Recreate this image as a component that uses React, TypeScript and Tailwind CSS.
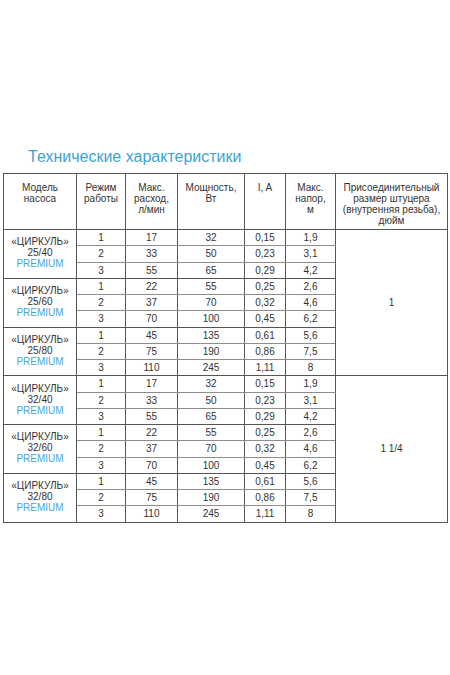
import React from "react";

type Row = [string, string, string, string, string];

const groups: { model: string; rows: Row[] }[] = [
  { model: "25/40", rows: [["1", "17", "32", "0,15", "1,9"], ["2", "33", "50", "0,23", "3,1"], ["3", "55", "65", "0,29", "4,2"]] },
  { model: "25/60", rows: [["1", "22", "55", "0,25", "2,6"], ["2", "37", "70", "0,32", "4,6"], ["3", "70", "100", "0,45", "6,2"]] },
  { model: "25/80", rows: [["1", "45", "135", "0,61", "5,6"], ["2", "75", "190", "0,86", "7,5"], ["3", "110", "245", "1,11", "8"]] },
  { model: "32/40", rows: [["1", "17", "32", "0,15", "1,9"], ["2", "33", "50", "0,23", "3,1"], ["3", "55", "65", "0,29", "4,2"]] },
  { model: "32/60", rows: [["1", "22", "55", "0,25", "2,6"], ["2", "37", "70", "0,32", "4,6"], ["3", "70", "100", "0,45", "6,2"]] },
  { model: "32/80", rows: [["1", "45", "135", "0,61", "5,6"], ["2", "75", "190", "0,86", "7,5"], ["3", "110", "245", "1,11", "8"]] },
];

export default function App() {
  return (
    <div className="w-[450px] h-[675px] bg-white text-[#333] overflow-hidden" style={{ fontFamily: '"Liberation Sans", Arial, sans-serif' }}>
      <div className="pt-[146px] pl-[28px] text-[16px] leading-[22px] text-[#3ea3d1]">
        Технические характеристики
      </div>
      <div className="pl-[3px] pt-[5px]">
        <table className="table-fixed border-collapse w-[444px] text-[10px] leading-[11px] text-center">
          <colgroup>
            <col className="w-[73px]" />
            <col className="w-[49px]" />
            <col className="w-[52px]" />
            <col className="w-[67px]" />
            <col className="w-[41px]" />
            <col className="w-[50px]" />
            <col className="w-[112px]" />
          </colgroup>
          <thead>
            <tr className="h-[56px]">
              {[
                "Модель\nнасоса",
                "Режим\nработы",
                "Макс.\nрасход,\nл/мин",
                "Мощность,\nВт",
                "I, A",
                "Макс.\nнапор,\nм",
                "Присоединительный\nразмер штуцера\n(внутренняя резьба),\nдюйм",
              ].map((h, i) => (
                <th key={i} className="border border-[#555] font-normal align-top pt-[8px] px-0 whitespace-pre-line">
                  {h}
                </th>
              ))}
            </tr>
          </thead>
          <tbody>
            {groups.map((g, gi) =>
              g.rows.map((r, ri) => (
                <tr key={gi + "-" + ri} className="h-[16.25px]">
                  {ri === 0 && (
                    <td rowSpan={3} className="border border-[#555] align-middle pb-[2px]">
                      <div>«ЦИРКУЛЬ»</div>
                      <div>{g.model}</div>
                      <div className="text-[#45a7d6]">PREMIUM</div>
                    </td>
                  )}
                  {r.map((c, ci) => (
                    <td
                      key={ci}
                      className={
                        "border-x border-x-[#555] p-0 " +
                        (ri === 0 ? "border-t border-t-[#555] " : "border-t border-t-[#8d8d8d] ") +
                        (ri === 2 ? "border-b border-b-[#555]" : "border-b border-b-[#8d8d8d]")
                      }
                    >
                      {c}
                    </td>
                  ))}
                  {gi % 3 === 0 && ri === 0 && (
                    <td rowSpan={9} className="border border-[#555] align-middle">
                      {gi === 0 ? "1" : "1 1/4"}
                    </td>
                  )}
                </tr>
              ))
            )}
          </tbody>
        </table>
      </div>
    </div>
  );
}
